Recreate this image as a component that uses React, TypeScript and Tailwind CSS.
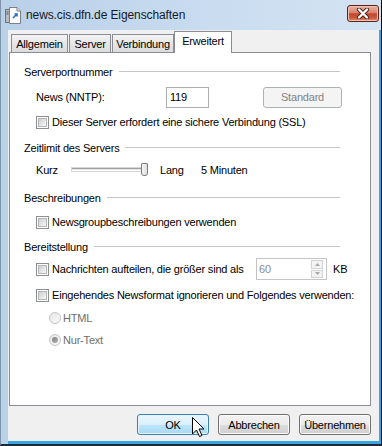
import React from "react";

const font = "font-['Liberation_Sans',Arial,sans-serif]";

const CheckBox = () => (
  <div className="w-[13px] h-[13px] border border-[#8e8f8f] bg-white p-[1px] shrink-0">
    <div className="w-full h-full border border-[#b4b6b8] bg-gradient-to-br from-[#cdcfd2] to-[#f7f7f7]" />
  </div>
);

const Radio = ({ checked }: { checked?: boolean }) => (
  <div className="w-[12px] h-[12px] rounded-full border border-[#c2c4c6] bg-gradient-to-br from-[#e6e6e6] to-[#fafafa] flex items-center justify-center shrink-0">
    {checked && <div className="w-[6px] h-[6px] rounded-full bg-gradient-to-br from-[#7c7c7c] to-[#b5b5b5]" />}
  </div>
);

const Group = ({ label, top }: { label: string; top: string }) => (
  <div className={`flex items-center h-[14px] ${top}`}>
    <span>{label}</span>
    <div className="flex-1 h-px bg-[#c2c5c8] ml-[6px] -mt-[2px]" />
  </div>
);

const Button = ({ label, primary }: { label: string; primary?: boolean }) => (
  <div
    className={`w-[72px] h-[21px] rounded-[3px] border flex items-center justify-center ${
      primary
        ? "border-[#3c7fb1] bg-[linear-gradient(to_bottom,#eaf6fd_0%,#d9f0fc_50%,#bee6fd_50%,#a7d9f5_100%)] shadow-[inset_0_0_0_1px_#e8f4fc]"
        : "border-[#707070] bg-[linear-gradient(to_bottom,#f2f2f2_0%,#ebebeb_50%,#dddddd_50%,#cfcfcf_100%)] shadow-[inset_0_0_0_1px_#fbfbfb]"
    }`}
  >
    {label}
  </div>
);

const Tab = ({ label, w, active }: { label: string; w: string; active?: boolean }) => (
  <div
    className={`${w} flex items-center justify-center border border-b-0 border-[#898c95] ${
      active
        ? "h-[22px] bg-white relative z-10 -mb-px -mx-[1px] pb-[3px]"
        : "h-[18px] bg-[linear-gradient(to_bottom,#f4f4f4,#e6e6e6_50%,#dcdcdc)] mr-[1px]"
    }`}
  >
    {label}
  </div>
);

export default function App() {
  return (
    <div
      className={`${font} text-[11px] leading-[14px] tracking-[-0.2px] text-black relative w-[382px] h-[446px] flex flex-col overflow-hidden bg-[linear-gradient(to_right,#b9d0e9,#c9dcf0_55%,#d4e3f2)] border-l border-r border-b-2 border-l-[#8193a8] border-r-[#0c0c0c] border-b-[#1d2a38]`}
    >
      {/* title bar */}
      <div className="h-[30px] flex items-center shrink-0">
        <svg className="ml-[4px]" width="16" height="17" viewBox="0 0 16 17">
          <rect x="0.5" y="2.5" width="4" height="13" fill="#b9bcc0" stroke="#6f737a" />
          <line x1="1.5" y1="5" x2="3.5" y2="5" stroke="#555" />
          <line x1="1.5" y1="7" x2="3.5" y2="7" stroke="#555" />
          <path d="M4.5 0.5 H12 L15.5 4 V16.5 H4.5 Z" fill="#fbfbfb" stroke="#7a7f88" />
          <path d="M12 0.5 V4 H15.5" fill="#e3e6ea" stroke="#7a7f88" />
          <path d="M8 11 L12 7 M9.5 7 H12 V9.5" stroke="#2a6fd0" strokeWidth="1.6" fill="none" />
        </svg>
        <span className="ml-[5px] text-[12px] tracking-[-0.1px] text-[#141a24]">news.cis.dfn.de Eigenschaften</span>
        <div className="ml-auto mr-[2px] mb-[4px] w-[32px] h-[17px] rounded-[3px] border border-[#5a2219] bg-[linear-gradient(to_bottom,#eab1a2_0%,#d98470_45%,#c5452d_52%,#cc5b3c_80%,#e0977a_100%)] shadow-[inset_0_0_0_1px_#efc2b4] flex items-center justify-center">
          <svg width="14" height="11" viewBox="0 0 14 11">
            <path d="M3 1.5 L11 9.5 M11 1.5 L3 9.5" stroke="#4a2018" strokeWidth="4.2" strokeLinecap="round" />
            <path d="M3 1.5 L11 9.5 M11 1.5 L3 9.5" stroke="#ffffff" strokeWidth="2.4" strokeLinecap="round" />
          </svg>
        </div>
      </div>

      {/* client */}
      <div className="ml-[7px] w-[373px] flex-1 border-r-2 border-b-[3px] border-r-[#3aa6df] border-b-[#3aa6df]">
        <div className="h-full bg-[#f0f0f0] flex flex-col">
          {/* tabs */}
          <div className="flex items-end h-[20px] mt-[2px] pl-[3px]">
            <Tab label="Allgemein" w="w-[57px]" />
            <Tab label="Server" w="w-[42px]" />
            <Tab label="Verbindung" w="w-[62px]" />
            <Tab label="Erweitert" w="w-[58px]" active />
          </div>

          {/* panel */}
          <div className="ml-[1px] w-[362px] h-[354px] border border-[#898c95] bg-white pt-[12px] pl-[14px] pr-[30px]">
            <Group label="Serverportnummer" top="" />
            <div className="flex items-center h-[22px] mt-[7px] pl-[12px]">
              <span className="w-[130px] shrink-0">News (NNTP):</span>
              <div className="w-[43px] h-[21px] shrink-0 border border-[#abadb3] flex items-center pl-[3px]">119</div>
              <div className="w-[79px] h-[21px] ml-[54px] shrink-0 rounded-[3px] border border-[#adb2b5] bg-[#f4f4f4] text-[#838383] flex items-center justify-center">
                Standard
              </div>
            </div>
            <div className="flex items-center h-[14px] mt-[7px] pl-[12px]">
              <CheckBox />
              <span className="ml-[3px]">Dieser Server erfordert eine sichere Verbindung (SSL)</span>
            </div>

            <Group label="Zeitlimit des Servers" top="mt-[12px]" />
            <div className="flex items-center h-[16px] mt-[6px] pl-[12px]">
              <span className="w-[36px] mt-[2px] shrink-0">Kurz</span>
              <div className="w-[76px] h-[14px] flex items-center shrink-0">
                <div className="w-[70px] h-[3px] border-t border-[#a0a0a0] border-b border-b-[#ffffff] bg-[#e4e4e4] shadow-[0_0_0_1px_#d6d6d6]" />
                <div className="w-[7px] h-[13px] -ml-[1px] rounded-b-[3px] rounded-t-[1px] border border-[#7b7b7b] bg-[linear-gradient(to_right,#f7f7f7,#dedede)]" />
              </div>
              <span className="w-[41px] ml-[12px] mt-[2px] shrink-0">Lang</span>
              <span className="mt-[2px]">5 Minuten</span>
            </div>

            <Group label="Beschreibungen" top="mt-[14px]" />
            <div className="flex items-center h-[14px] mt-[10px] pl-[12px]">
              <CheckBox />
              <span className="ml-[3px]">Newsgroupbeschreibungen verwenden</span>
            </div>

            <Group label="Bereitstellung" top="mt-[11px]" />
            <div className="flex items-center h-[22px] mt-[4px] pl-[12px] w-[330px]">
              <CheckBox />
              <span className="ml-[3px] w-[204px] shrink-0">Nachrichten aufteilen, die größer sind als</span>
              <div className="w-[71px] h-[22px] border border-[#c2c4c7] bg-white flex items-center shrink-0">
                <span className="pl-[2px] text-[#8b8b8b] flex-1">60</span>
                <div className="w-[12px] h-[18px] mr-[3px] flex flex-col gap-px">
                  <div className="flex-1 border border-[#d0d2d4] bg-[#f3f3f3] flex items-center justify-center">
                    <svg width="5" height="3" viewBox="0 0 5 3"><path d="M0 3 L2.5 0 L5 3 Z" fill="#a8a8a8" /></svg>
                  </div>
                  <div className="flex-1 border border-[#d0d2d4] bg-[#f3f3f3] flex items-center justify-center">
                    <svg width="5" height="3" viewBox="0 0 5 3"><path d="M0 0 L2.5 3 L5 0 Z" fill="#a8a8a8" /></svg>
                  </div>
                </div>
              </div>
              <span className="ml-[6px] shrink-0">KB</span>
            </div>
            <div className="flex items-center h-[14px] mt-[8px] pl-[12px]">
              <CheckBox />
              <span className="ml-[3px] whitespace-nowrap">Eingehendes Newsformat ignorieren und Folgendes verwenden:</span>
            </div>
            <div className="flex items-center h-[14px] mt-[9px] pl-[25px] text-[#6d6d6d]">
              <Radio />
              <span className="ml-[2px]">HTML</span>
            </div>
            <div className="flex items-center h-[14px] mt-[8px] pl-[25px] text-[#6d6d6d]">
              <Radio checked />
              <span className="ml-[2px]">Nur-Text</span>
            </div>
          </div>

          {/* buttons */}
          <div className="flex justify-end gap-[9px] mt-[8px] pr-[8px]">
            <Button label="OK" primary />
            <Button label="Abbrechen" />
            <Button label="Übernehmen" />
          </div>
        </div>
      </div>

      {/* mouse cursor over OK */}
      <svg className="absolute left-[191px] top-[417px]" width="13" height="21" viewBox="0 0 13 21">
        <path d="M0.5 0.5 V17 L4.5 13 L7.5 19.5 L10 18.5 L7 12 H12 Z" fill="#ffffff" stroke="#000000" strokeLinejoin="round" />
      </svg>
    </div>
  );
}
